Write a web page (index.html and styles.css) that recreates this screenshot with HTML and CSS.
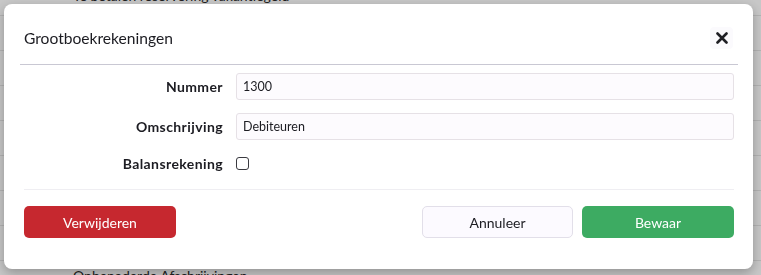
FILE: index.html
```html
<!DOCTYPE html>
<html lang="nl">
<head>
  <meta charset="UTF-8" />
  <meta name="viewport" content="width=device-width, initial-scale=1" />
  <title>Grootboekrekeningen</title>
  <link rel="stylesheet" href="styles.css">
</head>
<body>
  <!-- Page behind the dialog -->
  <div class="ledger">
    <div class="ledger-row">Te betalen reservering vakantiegeld</div>
    <div class="ledger-row">Te betalen loonheffing</div>
    <div class="ledger-row">Te betalen pensioenpremie</div>
    <div class="ledger-row">Debiteuren</div>
    <div class="ledger-row">Crediteuren</div>
    <div class="ledger-row">Kas</div>
    <div class="ledger-row">Bank</div>
    <div class="ledger-row">Vooruitbetaalde kosten</div>
    <div class="ledger-row">Onbenaderde Afschrijvingen</div>
  </div>

  <div class="overlay"></div>

  <!-- Dialog -->
  <div class="modal">
    <div class="modal-header">
      <h1 class="modal-title">Grootboekrekeningen</h1>
      <button class="close-btn" type="button" aria-label="Sluiten">
        <svg viewBox="0 0 12 12" width="12" height="12">
          <path d="M1.5 1.5 L10.5 10.5 M10.5 1.5 L1.5 10.5" stroke="#1f1f24" stroke-width="2.6" stroke-linecap="round" fill="none" />
        </svg>
      </button>
    </div>

    <form class="modal-body">
      <label class="field-label" for="nummer">Nummer</label>
      <input class="field-input" id="nummer" type="text" value="1300">

      <label class="field-label" for="omschrijving">Omschrijving</label>
      <input class="field-input" id="omschrijving" type="text" value="Debiteuren">

      <label class="field-label" for="balans">Balansrekening</label>
      <div class="check-wrap">
        <input class="field-check" id="balans" type="checkbox">
      </div>
    </form>

    <div class="modal-footer">
      <button class="btn btn-danger" type="button">Verwijderen</button>
      <div class="footer-right">
        <button class="btn btn-light" type="button">Annuleer</button>
        <button class="btn btn-success" type="button">Bewaar</button>
      </div>
    </div>
  </div>
</body>
</html>
```

FILE: styles.css
```css
html, body {
  height: 100%;
}

body {
  margin: 0;
  background-color: #ffffff;
  font-family: Lato, "Noto Sans", sans-serif;
  color: #1c1c22;
  overflow: hidden;
}

/* table behind the dialog */
.ledger {
  margin-top: -19px;
  height: calc(100% + 19px);
  overflow: hidden;
}

.ledger-row {
  height: 34px;
  line-height: 30px;
  padding-left: 73px;
  font-size: 14px;
  color: #2a2a2a;
  border-bottom: 1px solid #e6e6e6;
}

.overlay {
  position: fixed;
  inset: 0;
  background: rgba(0, 0, 0, 0.22);
}

.modal {
  position: fixed;
  top: 4px;
  left: 4px;
  width: 749px;
  height: 265px;
  background: #ffffff;
  border-radius: 8px;
  box-shadow: 0 4px 12px rgba(0, 0, 0, 0.28);
  box-sizing: border-box;
}

.modal-header {
  display: flex;
  align-items: center;
  justify-content: space-between;
  margin: 0 15px 0 16px;
  padding: 23px 5px 15px 4px;
  border-bottom: 1px solid #c9c8d3;
}

.modal-title {
  margin: 0;
  font-size: 15.6px;
  font-weight: 400;
  line-height: 22px;
  color: #1c1c22;
}

.close-btn {
  width: 23px;
  height: 22px;
  padding: 0;
  border: none;
  border-radius: 4px;
  background: #fbfafd;
  display: flex;
  align-items: center;
  justify-content: center;
}

.modal-body {
  display: grid;
  grid-template-columns: 199px 1fr;
  column-gap: 13px;
  row-gap: 13px;
  align-items: center;
  margin: 8px 19px 0 20px;
  padding-bottom: 15px;
  border-bottom: 1px solid #efeef2;
}

.field-label {
  text-align: right;
  font-size: 14px;
  font-weight: 700;
  letter-spacing: 0.4px;
  line-height: 20px;
  color: #1c1c22;
}

.field-input {
  height: 27px;
  box-sizing: border-box;
  padding: 0 6px;
  font-family: inherit;
  font-size: 12.5px;
  color: #1c1c22;
  background: #fdfbfe;
  border: 1px solid #e6e1e6;
  border-radius: 3px;
}

.check-wrap {
  height: 21px;
  display: flex;
  align-items: center;
}

.field-check {
  appearance: none;
  margin: 0;
  width: 13px;
  height: 13px;
  border: 1.5px solid #3a3a40;
  border-radius: 3px;
  background: #ffffff;
}

.modal-footer {
  display: flex;
  justify-content: space-between;
  margin: 16px 19px 0 20px;
}

.footer-right {
  display: flex;
  gap: 9px;
}

.btn {
  width: 152px;
  height: 32px;
  border-radius: 5px;
  font-family: inherit;
  font-size: 14px;
  border: 1px solid transparent;
  color: #ffffff;
}

.btn-danger {
  background: #c6282f;
}

.btn-light {
  width: 151px;
  background: #fcfaff;
  border-color: #e2dfe9;
  color: #1c1c22;
}

.btn-success {
  background: #3dab62;
}
```
